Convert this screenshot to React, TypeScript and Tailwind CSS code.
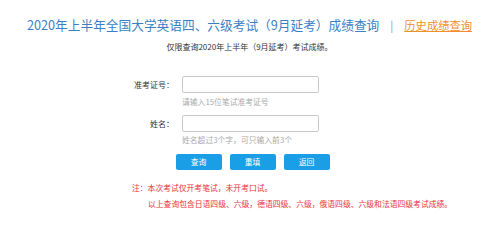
import React from "react";

const font = { fontFamily: '"Noto Sans CJK SC", "Noto Sans", sans-serif' };

export default function App() {
  return (
    <div
      className="w-[499px] h-[240px] bg-white overflow-hidden"
      style={font}
    >
      <div className="pt-[15px] flex items-center justify-center">
        <span className="text-[12.7px] leading-[20px] text-[#3a7fc6] whitespace-nowrap">
          2020年上半年全国大学英语四、六级考试（9月延考）成绩查询
        </span>
        <span className="text-[11px] leading-[20px] text-[#6aa0d6] mx-[11px]">|</span>
        <span className="text-[11.3px] leading-[20px] text-[#f0902a] underline whitespace-nowrap">
          历史成绩查询
        </span>
      </div>

      <div className="mt-[6px] text-center text-[8px] leading-[12px] text-[#333]">
        仅限查询2020年上半年（9月延考）考试成绩。
      </div>

      <div className="mt-[23px] flex flex-col items-start pl-[130px]">
        <div className="flex items-center">
          <span className="w-[44px] text-right text-[8px] text-[#333] whitespace-nowrap">
            准考证号：
          </span>
          <div className="ml-[8px] w-[137px] h-[17px] border border-[#c9c9c9] rounded-[2px] bg-white" />
        </div>
        <div className="mt-[3px] ml-[52px] text-[7.8px] leading-[12px] text-[#aaaaaa] whitespace-nowrap">
          请输入15位笔试准考证号
        </div>

        <div className="mt-[7px] flex items-center">
          <span className="w-[44px] text-right text-[8px] text-[#333] whitespace-nowrap">
            姓名：
          </span>
          <div className="ml-[8px] w-[137px] h-[17px] border border-[#c9c9c9] rounded-[2px] bg-white" />
        </div>
        <div className="mt-[2px] ml-[52px] text-[7.8px] leading-[12px] text-[#aaaaaa] whitespace-nowrap">
          姓名超过3个字，可只输入前3个
        </div>
      </div>

      <div className="mt-[8px] flex justify-center gap-[8px] pl-[6px]">
        {["查询", "重填", "返回"].map((t) => (
          <div
            key={t}
            className="w-[46px] h-[16px] bg-[#1a9fe6] rounded-[2px] text-white text-[7.8px] flex items-center justify-center"
          >
            {t}
          </div>
        ))}
      </div>

      <div className="mt-[12px] pl-[132px] text-[7.8px] leading-[12px] text-[#e8323c] whitespace-nowrap">
        注：本次考试仅开考笔试，未开考口试。
      </div>
      <div className="mt-[4px] pl-[148px] text-[7.8px] leading-[12px] text-[#e8323c] whitespace-nowrap">
        以上查询包含日语四级、六级，德语四级、六级，俄语四级、六级和法语四级考试成绩。
      </div>
    </div>
  );
}
